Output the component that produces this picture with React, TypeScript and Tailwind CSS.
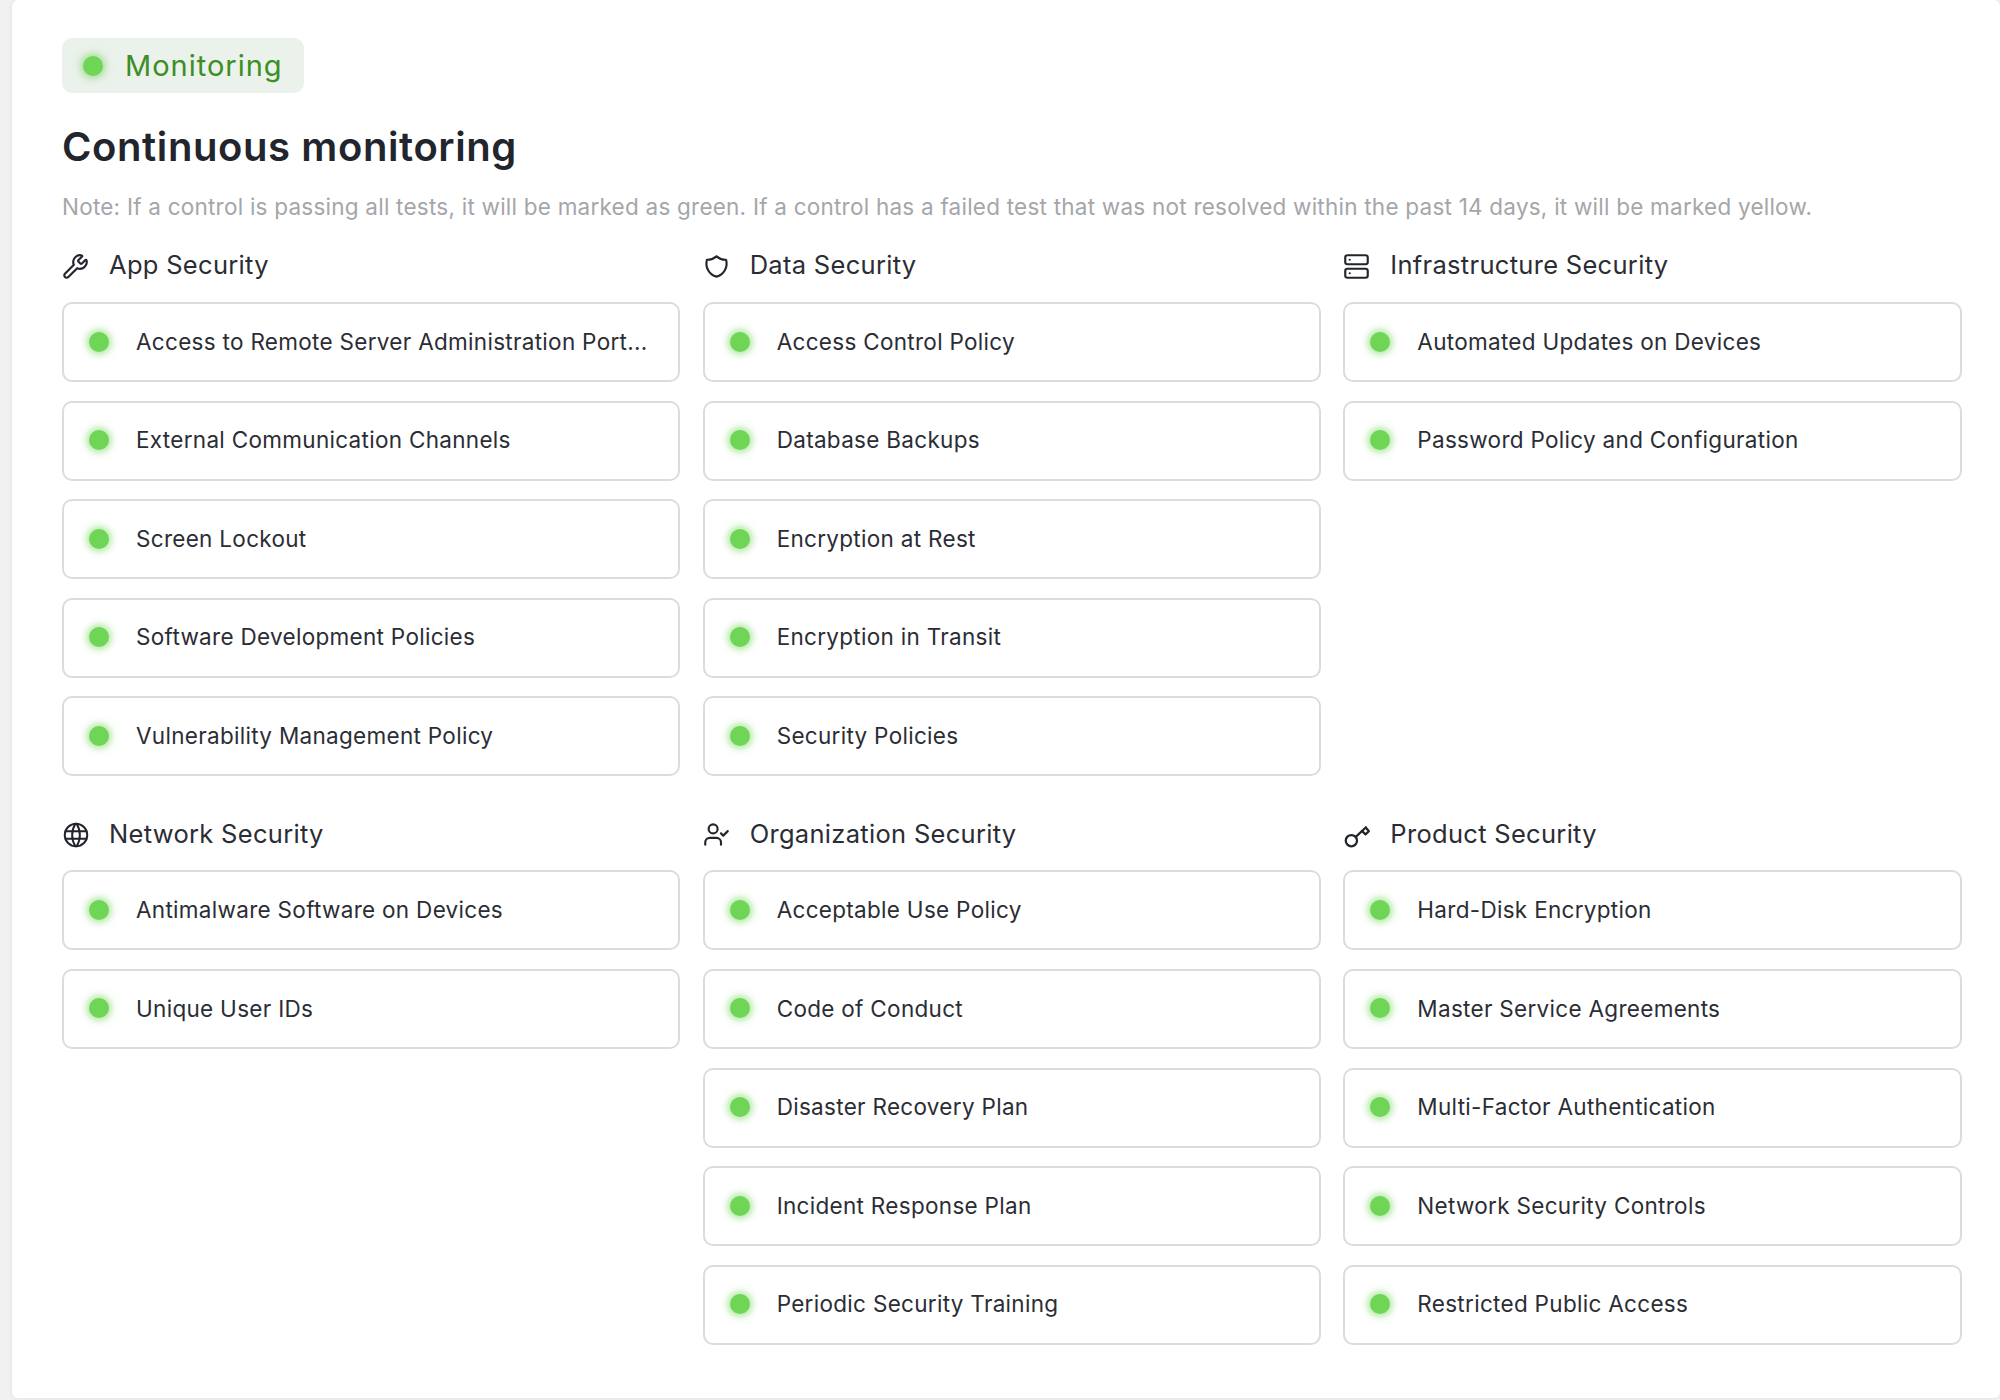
import { Server, UserCheck, Wrench } from 'lucide-react';
import { TbShield, TbWorld } from 'react-icons/tb';
import type { ReactNode } from 'react';

interface Section {
  title: string;
  icon: ReactNode;
  items: string[];
}

const iconClass = 'w-[27px] h-[27px] shrink-0 translate-y-[1px] text-[#23252d]';
const bigIconClass = 'w-[30px] h-[30px] -mx-[1.5px] shrink-0 translate-y-[1px] text-[#23252d]';

const KeyIcon = () => (
  <svg viewBox="0 0 24 24" fill="none" stroke="currentColor" strokeWidth="1.8" strokeLinecap="round" strokeLinejoin="round" className={bigIconClass}>
    <circle cx="7.5" cy="16.5" r="4.5" />
    <path d="M11 13.5 19 6" />
    <path d="M16 8.8 18.8 11.5 21.5 9 19 6" />
  </svg>
);

const SECTIONS: Section[] = [
  {
    title: 'App Security',
    icon: <Wrench className={iconClass} strokeWidth={1.9} />,
    items: [
      'Access to Remote Server Administration Port...',
      'External Communication Channels',
      'Screen Lockout',
      'Software Development Policies',
      'Vulnerability Management Policy',
    ],
  },
  {
    title: 'Data Security',
    icon: <TbShield className={iconClass} strokeWidth={1.9} />,
    items: ['Access Control Policy', 'Database Backups', 'Encryption at Rest', 'Encryption in Transit', 'Security Policies'],
  },
  {
    title: 'Infrastructure Security',
    icon: <Server className={iconClass} strokeWidth={1.9} />,
    items: ['Automated Updates on Devices', 'Password Policy and Configuration'],
  },
  {
    title: 'Network Security',
    icon: <TbWorld className={bigIconClass} strokeWidth={1.6} />,
    items: ['Antimalware Software on Devices', 'Unique User IDs'],
  },
  {
    title: 'Organization Security',
    icon: <UserCheck className={iconClass} strokeWidth={1.9} />,
    items: ['Acceptable Use Policy', 'Code of Conduct', 'Disaster Recovery Plan', 'Incident Response Plan', 'Periodic Security Training'],
  },
  {
    title: 'Product Security',
    icon: <KeyIcon />,
    items: ['Hard-Disk Encryption', 'Master Service Agreements', 'Multi-Factor Authentication', 'Network Security Controls', 'Restricted Public Access'],
  },
];

const Dot = () => (
  <span className="w-[20px] h-[20px] shrink-0 rounded-full bg-[#6fd556] blur-[0.6px] shadow-[0_0_6px_3px_rgba(111,213,86,0.5)]" />
);

export default function App() {
  return (
    <div className="min-h-[1400px] bg-[#f1f1f1] pl-[12px] font-['Inter',sans-serif]">
      <div className="h-[1398px] rounded-[6px] bg-white pt-[38px] pl-[50px] pr-[38.5px] shadow-[0_0_4px_rgba(0,0,0,0.08)]">
        <div className="flex h-[55px] w-[242px] items-center gap-[22px] rounded-[10px] bg-[#ebf1eb] pl-[21px]">
          <Dot />
          <span className="text-[29px] tracking-[1px] text-[#3b8f25]">Monitoring</span>
        </div>
        <h1 className="mt-[29px] text-[40px] leading-[50px] font-semibold tracking-[0.6px] text-[#23252d]">Continuous monitoring</h1>
        <p className="mt-[18px] text-[22.5px] leading-[34px] tracking-[0.23px] text-[#a5a6a9]">
          Note: If a control is passing all tests, it will be marked as green. If a control has a failed test that was not resolved within the past 14 days, it will be marked yellow.
        </p>
        <div className="mt-[22px] grid grid-cols-3 gap-x-[22.5px] gap-y-[38px]">
          {SECTIONS.map((section) => (
            <div key={section.title}>
              <div className="flex h-[56px] items-center gap-[20px] pb-[17px]">
                {section.icon}
                <h2 className="text-[25.5px] tracking-[0.3px] text-[#2b2d35]">{section.title}</h2>
              </div>
              <div className="flex flex-col gap-[18.6px]">
                {section.items.map((item) => (
                  <div
                    key={item}
                    className="flex h-[80px] items-center gap-[27px] rounded-[10px] border-2 border-[#dcdcdc] pl-[25px] pb-[1px]"
                  >
                    <Dot />
                    <span className="text-[22.5px] tracking-[0.3px] text-[#2b2d35]">{item}</span>
                  </div>
                ))}
              </div>
            </div>
          ))}
        </div>
      </div>
    </div>
  );
}
